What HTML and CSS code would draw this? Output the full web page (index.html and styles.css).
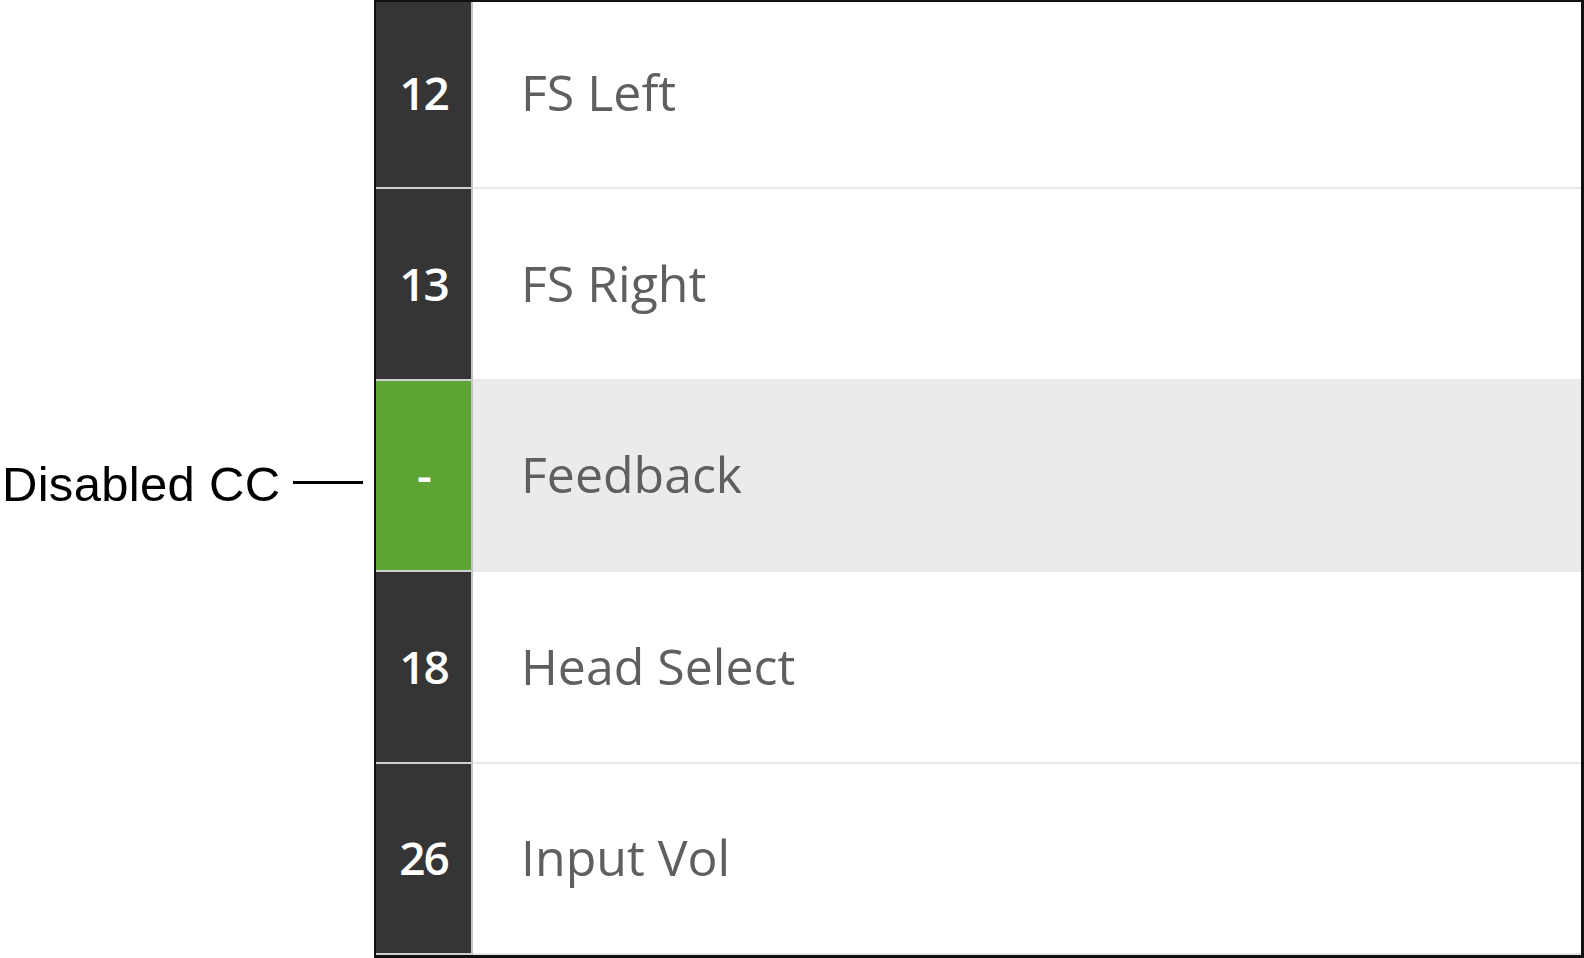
FILE: index.html
```html
<!DOCTYPE html>
<html>
<head>
<meta charset="utf-8">
<link rel="stylesheet" href="styles.css">
</head>
<body>
<div class="page">
  <div class="annotation">
    <span class="callout">Disabled CC</span>
    <span class="leader"></span>
  </div>
  <div class="panel">
    <div class="row row-first">
      <div class="cc">12</div>
      <div class="name">FS Left</div>
    </div>
    <div class="row">
      <div class="cc">13</div>
      <div class="name">FS Right</div>
    </div>
    <div class="row row-selected">
      <div class="cc cc-disabled">-</div>
      <div class="name">Feedback</div>
    </div>
    <div class="row">
      <div class="cc">18</div>
      <div class="name">Head Select</div>
    </div>
    <div class="row">
      <div class="cc">26</div>
      <div class="name">Input Vol</div>
    </div>
  </div>
</div>
</body>
</html>
```

FILE: styles.css
```css
html, body {
  margin: 0;
  padding: 0;
  background: #ffffff;
}

.page {
  display: flex;
  width: 1584px;
  height: 958px;
}

.annotation {
  width: 374px;
  flex: none;
  display: flex;
  align-items: center;
  padding-left: 2px;
  box-sizing: border-box;
  padding-top: 9px;
}

.callout {
  font-family: "Liberation Sans", Arial, sans-serif;
  font-size: 49px;
  color: #000;
  letter-spacing: 0.3px;
}

.leader {
  display: block;
  width: 70px;
  height: 3px;
  background: #000;
  margin-left: 13px;
  margin-top: -2px;
}

.panel {
  flex: 1;
  border: 2px solid #111;
  border-right-width: 3px;
  border-bottom-width: 3px;
  display: flex;
  flex-direction: column;
  box-sizing: border-box;
  height: 958px;
}

.row {
  flex: 1 1 0;
  display: flex;
  background: #fff;
  border-bottom: 2px solid #e8e8e8;
}

.row-first {
  flex: 0 0 185px;
}

.row-first .cc,
.row-first .name {
  padding-bottom: 5px;
}

.row-selected {
  background: #ebebeb;
}

.cc {
  width: 97px;
  flex: none;
  background: #353535;
  border-right: 2px solid #c4c4c4;
  border-bottom: 2px solid #cfcfcf;
  margin-bottom: -2px;
  display: flex;
  align-items: center;
  justify-content: center;
  padding-bottom: 2px;
  box-sizing: border-box;
  color: #fff;
  font-family: "Open Sans", sans-serif;
  font-weight: 600;
  font-size: 46px;
  letter-spacing: -2px;
}

.cc-disabled {
  background: #5fa536;
}

.name {
  display: flex;
  align-items: center;
  padding-left: 48px;
  padding-bottom: 2px;
  font-family: "Open Sans", sans-serif;
  font-size: 50px;
  color: #5f5f5f;
}
```
